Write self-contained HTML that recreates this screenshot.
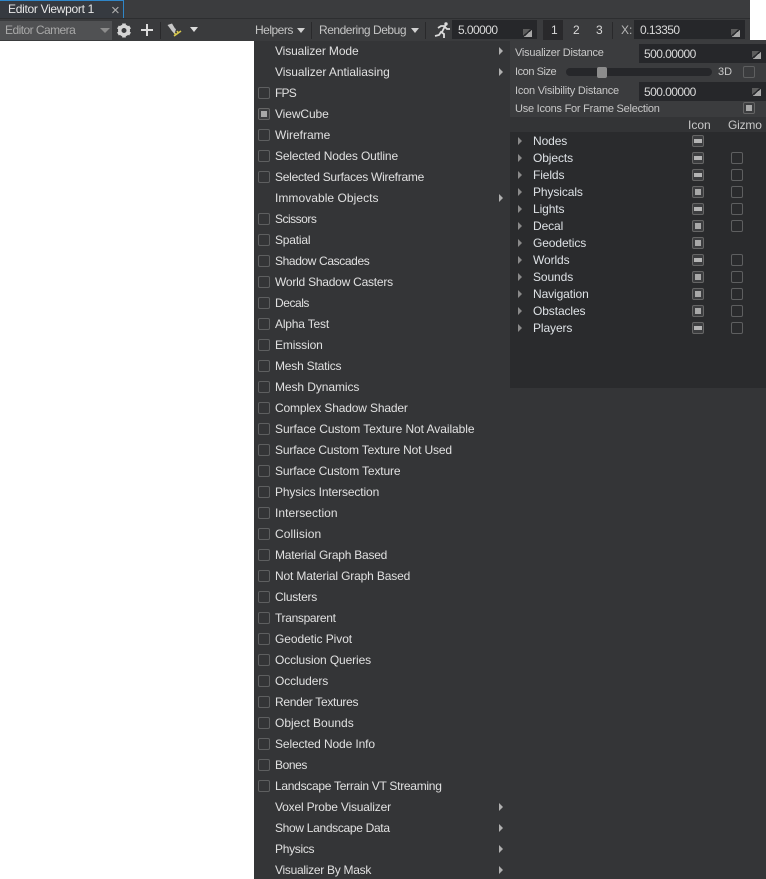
<!DOCTYPE html>
<html><head><meta charset="utf-8"><style>
html,body{margin:0;padding:0;width:766px;height:879px;overflow:hidden;background:#fff}
body{position:relative;font:12px/15px "Liberation Sans",sans-serif;color:#d4d4d4}
div,svg{position:absolute}
.t{white-space:nowrap;color:#d8d8d8}
.p{white-space:nowrap;color:#c8c8c8;font-size:11px;left:515px}
.m{left:275px;height:21px;line-height:21px;color:#e0e0e0;white-space:nowrap}
.c{width:10px;height:10px;border:1px solid #5e5f60;border-radius:2px;background:#343537}
.c[style*="left:258px"]{margin-top:1px}
.on::after{content:"";position:absolute;left:2px;top:2px;width:6px;height:6px;background:#a8a8a8}
.mid::after{content:"";position:absolute;left:1px;top:3px;width:8px;height:4px;background:#b4b4b4}
.mid,.on{border:1px solid #666;background:#3c3d3f}
.ar{width:0;height:0;border-left:4px solid #b0b0b0;border-top:4px solid transparent;border-bottom:4px solid transparent}
.ar2{width:0;height:0;border-left:4px solid #8a8a8a;border-top:4px solid transparent;border-bottom:4px solid transparent}
.f{background:#26272a;height:19px;line-height:20px;color:#d8d8d8;padding-left:6px;box-sizing:border-box;letter-spacing:-.55px}
.g{width:9px;height:8px;background:linear-gradient(to bottom right,#5c5c5c 0 42%,transparent 42% 55%,#a8a8a8 55%)}
.n{left:533px;height:17px;line-height:17px;color:#dde1e5;letter-spacing:-.1px;white-space:nowrap}
.sep{width:1px;background:#29292b}
.z{background:#2a2b2d}
</style></head><body>
<div style="left:0;top:0;width:750px;height:19px;background:#3b3c3e"></div>
<div style="left:0;top:18px;width:750px;height:1px;background:#2d2e30"></div>
<div style="left:0;top:19px;width:750px;height:22px;background:#3a3b3d"></div>
<div style="left:0;top:0;width:124px;height:18px;background:#363a40;border-top:1px solid #2f86c8;box-sizing:border-box"></div>
<div style="left:123px;top:0;width:1px;height:18px;background:#2f86c8"></div>
<div class="t" style="left:8px;top:2px;color:#e8e8e8;letter-spacing:-.3px">Editor Viewport 1</div>
<div style="left:111px;top:3px;color:#b0b0b0;font-size:15px">×</div>
<div style="left:0;top:21px;width:112px;height:19px;background:#505153"></div>
<div class="t" style="left:5px;top:23px;color:#a8a8a8;letter-spacing:-.55px">Editor Camera</div>
<div style="left:100px;top:28px;width:0;height:0;border-top:5px solid #8c8c8c;border-left:5px solid transparent;border-right:5px solid transparent"></div>
<svg style="left:116px;top:22px" width="16" height="16" viewBox="0 0 16 16"><g fill="#d4d4d4"><path fill-rule="evenodd" d="M8 2.500a6 6 0 1 0 0 12 6 6 0 0 0 0-12zM8 6a2.500 2.500 0 1 1 0 5 2.500 2.500 0 0 1 0-5z"/><rect x="6.200" y="1.500" width="3.600" height="3"/><rect x="6.200" y="12.500" width="3.600" height="3"/><rect x="6.200" y="1.500" width="3.600" height="3" transform="rotate(60 8 8.500)"/><rect x="6.200" y="1.500" width="3.600" height="3" transform="rotate(120 8 8.500)"/><rect x="6.200" y="1.500" width="3.600" height="3" transform="rotate(240 8 8.500)"/><rect x="6.200" y="1.500" width="3.600" height="3" transform="rotate(300 8 8.500)"/></g></svg>
<div style="left:141px;top:29px;width:12px;height:2px;background:#dcdcdc"></div>
<div style="left:146px;top:24px;width:2px;height:12px;background:#dcdcdc"></div>
<div class="sep" style="left:160px;top:22px;height:17px"></div>
<svg style="left:166px;top:22px" width="17" height="17" viewBox="0 0 17 17"><path fill="#c8c8c8" d="M1.500 3L6 1.500l3 5 1 .5-1.500 5-3-3.500-1-1.500z"/><path stroke="#d8c84c" stroke-width="1.600" fill="none" d="M8 14l7-5M11 9l1.500 2.500M8.500 11l1.500 2"/></svg>
<div style="left:190px;top:27px;width:0;height:0;border-top:5px solid #dcdcdc;border-left:4.500px solid transparent;border-right:4.500px solid transparent"></div>
<div class="t" style="left:255px;top:23px;color:#c4c4c4;letter-spacing:-.5px">Helpers</div>
<div style="left:297px;top:28px;width:0;height:0;border-top:5px solid #d0d0d0;border-left:4.500px solid transparent;border-right:4.500px solid transparent"></div>
<div class="sep" style="left:311px;top:22px;height:17px"></div>
<div class="t" style="left:319px;top:23px;color:#c4c4c4;letter-spacing:-.47px">Rendering Debug</div>
<div style="left:411px;top:28px;width:0;height:0;border-top:5px solid #d0d0d0;border-left:4.500px solid transparent;border-right:4.500px solid transparent"></div>
<div class="sep" style="left:425px;top:22px;height:17px"></div>
<svg style="left:434px;top:21px" width="18" height="18" viewBox="0 0 18 18"><circle cx="12" cy="3" r="1.700" fill="#dcdcdc"/><path d="M1 15l4-1 2-3 3 2 0 4M4 7l3-2 4 0 -3 6M11 6l2 2 3 0" stroke="#dcdcdc" stroke-width="1.800" fill="none"/></svg>
<div class="f" style="left:452px;top:20px;width:85px">5.00000</div>
<div class="g" style="left:523px;top:29px"></div>
<div style="left:543px;top:20px;width:20px;height:20px;background:#29292b"></div>
<div class="t" style="left:551px;top:23px">1</div>
<div class="t" style="left:573px;top:23px">2</div>
<div class="t" style="left:596px;top:23px">3</div>
<div class="sep" style="left:612px;top:22px;height:17px"></div>
<div class="t" style="left:621px;top:23px;color:#b8b8b8">X:</div>
<div class="f" style="left:634px;top:20px;width:111px">0.13350</div>
<div class="g" style="left:731px;top:29px"></div>

<div style="left:254px;top:41px;width:512px;height:838px;background:#343537"></div>
<div style="left:510px;top:40px;width:256px;height:77px;background:#3b3c3e"></div>
<div style="left:510px;top:117px;width:256px;height:15px;background:#333436"></div>
<div style="left:510px;top:132px;width:256px;height:256px;background:#2a2b2d"></div>

<div class="m" style="top:41px;letter-spacing:-.11px">Visualizer Mode</div><div class="ar" style="left:499px;top:47px"></div>
<div class="m" style="top:62px;letter-spacing:-.05px">Visualizer Antialiasing</div><div class="ar" style="left:499px;top:68px"></div>
<div class="c" style="left:258px;top:86px"></div><div class="m" style="top:83px;letter-spacing:-.8px">FPS</div>
<div class="c on" style="left:258px;top:107px"></div><div class="m" style="top:104px;letter-spacing:-.1px">ViewCube</div>
<div class="c" style="left:258px;top:128px"></div><div class="m" style="top:125px">Wireframe</div>
<div class="c" style="left:258px;top:149px"></div><div class="m" style="top:146px;letter-spacing:-.14px">Selected Nodes Outline</div>
<div class="c" style="left:258px;top:170px"></div><div class="m" style="top:167px;letter-spacing:-.26px">Selected Surfaces Wireframe</div>
<div class="m" style="top:188px;letter-spacing:.05px">Immovable Objects</div><div class="ar" style="left:499px;top:194px"></div>
<div class="c" style="left:258px;top:212px"></div><div class="m" style="top:209px;letter-spacing:-.5px">Scissors</div>
<div class="c" style="left:258px;top:233px"></div><div class="m" style="top:230px;letter-spacing:-.2px">Spatial</div>
<div class="c" style="left:258px;top:254px"></div><div class="m" style="top:251px;letter-spacing:-.38px">Shadow Cascades</div>
<div class="c" style="left:258px;top:275px"></div><div class="m" style="top:272px;letter-spacing:-.23px">World Shadow Casters</div>
<div class="c" style="left:258px;top:296px"></div><div class="m" style="top:293px;letter-spacing:-.45px">Decals</div>
<div class="c" style="left:258px;top:317px"></div><div class="m" style="top:314px;letter-spacing:-.18px">Alpha Test</div>
<div class="c" style="left:258px;top:338px"></div><div class="m" style="top:335px;letter-spacing:-.12px">Emission</div>
<div class="c" style="left:258px;top:359px"></div><div class="m" style="top:356px;letter-spacing:-.2px">Mesh Statics</div>
<div class="c" style="left:258px;top:380px"></div><div class="m" style="top:377px;letter-spacing:-.08px">Mesh Dynamics</div>
<div class="c" style="left:258px;top:401px"></div><div class="m" style="top:398px;letter-spacing:-.16px">Complex Shadow Shader</div>
<div class="c" style="left:258px;top:422px"></div><div class="m" style="top:419px;letter-spacing:-.06px">Surface Custom Texture Not Available</div>
<div class="c" style="left:258px;top:443px"></div><div class="m" style="top:440px;letter-spacing:-.16px">Surface Custom Texture Not Used</div>
<div class="c" style="left:258px;top:464px"></div><div class="m" style="top:461px;letter-spacing:-.14px">Surface Custom Texture</div>
<div class="c" style="left:258px;top:485px"></div><div class="m" style="top:482px;letter-spacing:-.13px">Physics Intersection</div>
<div class="c" style="left:258px;top:506px"></div><div class="m" style="top:503px;letter-spacing:.05px">Intersection</div>
<div class="c" style="left:258px;top:527px"></div><div class="m" style="top:524px;letter-spacing:.1px">Collision</div>
<div class="c" style="left:258px;top:548px"></div><div class="m" style="top:545px;letter-spacing:-.23px">Material Graph Based</div>
<div class="c" style="left:258px;top:569px"></div><div class="m" style="top:566px;letter-spacing:-.15px">Not Material Graph Based</div>
<div class="c" style="left:258px;top:590px"></div><div class="m" style="top:587px;letter-spacing:-.25px">Clusters</div>
<div class="c" style="left:258px;top:611px"></div><div class="m" style="top:608px;letter-spacing:-.33px">Transparent</div>
<div class="c" style="left:258px;top:632px"></div><div class="m" style="top:629px;letter-spacing:-.07px">Geodetic Pivot</div>
<div class="c" style="left:258px;top:653px"></div><div class="m" style="top:650px;letter-spacing:-.12px">Occlusion Queries</div>
<div class="c" style="left:258px;top:674px"></div><div class="m" style="top:671px;letter-spacing:-.1px">Occluders</div>
<div class="c" style="left:258px;top:695px"></div><div class="m" style="top:692px;letter-spacing:-.31px">Render Textures</div>
<div class="c" style="left:258px;top:716px"></div><div class="m" style="top:713px">Object Bounds</div>
<div class="c" style="left:258px;top:737px"></div><div class="m" style="top:734px;letter-spacing:-.12px">Selected Node Info</div>
<div class="c" style="left:258px;top:758px"></div><div class="m" style="top:755px;letter-spacing:-.4px">Bones</div>
<div class="c" style="left:258px;top:779px"></div><div class="m" style="top:776px;letter-spacing:-.28px">Landscape Terrain VT Streaming</div>
<div class="m" style="top:797px;letter-spacing:-.18px">Voxel Probe Visualizer</div><div class="ar" style="left:499px;top:803px"></div>
<div class="m" style="top:818px;letter-spacing:-.32px">Show Landscape Data</div><div class="ar" style="left:499px;top:824px"></div>
<div class="m" style="top:839px;letter-spacing:-.3px">Physics</div><div class="ar" style="left:499px;top:845px"></div>
<div class="m" style="top:860px;letter-spacing:-.28px">Visualizer By Mask</div><div class="ar" style="left:499px;top:866px"></div>

<div class="p" style="top:46px;letter-spacing:-.25px">Visualizer Distance</div>
<div class="f" style="left:639px;top:44px;width:127px;padding-left:5px">500.00000</div>
<div class="g" style="left:752px;top:51px"></div>
<div class="p" style="top:65px;letter-spacing:-.45px">Icon Size</div>
<div style="left:566px;top:68px;width:146px;height:8px;border-radius:4px;background:#26272a"></div>
<div style="left:597px;top:67px;width:10px;height:11px;border-radius:2px;background:#8c8c8c"></div>
<div class="t" style="left:718px;top:65px;color:#c8c8c8;font-size:11px">3D</div>
<div class="c" style="left:743px;top:66px;background:#3b3c3e"></div>
<div class="p" style="top:84px;letter-spacing:-.22px">Icon Visibility Distance</div>
<div class="f" style="left:639px;top:82px;width:127px;padding-left:5px">500.00000</div>
<div class="g" style="left:752px;top:88px"></div>
<div class="p" style="top:102px;letter-spacing:-.24px">Use Icons For Frame Selection</div>
<div class="c on" style="left:743px;top:102px"></div>
<div class="t" style="left:688px;top:118px;color:#c8c8c8">Icon</div>
<div class="t" style="left:728px;top:118px;color:#c8c8c8;letter-spacing:-.2px">Gizmo</div>

<div class="ar2" style="left:518px;top:137px"></div><div class="n" style="top:133px">Nodes</div><div class="c mid" style="left:692px;top:135px"></div>
<div class="ar2" style="left:518px;top:154px"></div><div class="n" style="top:150px">Objects</div><div class="c mid" style="left:692px;top:152px"></div><div class="c z" style="left:731px;top:152px"></div>
<div class="ar2" style="left:518px;top:171px"></div><div class="n" style="top:167px">Fields</div><div class="c mid" style="left:692px;top:169px"></div><div class="c z" style="left:731px;top:169px"></div>
<div class="ar2" style="left:518px;top:188px"></div><div class="n" style="top:184px">Physicals</div><div class="c on" style="left:692px;top:186px"></div><div class="c z" style="left:731px;top:186px"></div>
<div class="ar2" style="left:518px;top:205px"></div><div class="n" style="top:201px">Lights</div><div class="c mid" style="left:692px;top:203px"></div><div class="c z" style="left:731px;top:203px"></div>
<div class="ar2" style="left:518px;top:222px"></div><div class="n" style="top:218px">Decal</div><div class="c on" style="left:692px;top:220px"></div><div class="c z" style="left:731px;top:220px"></div>
<div class="ar2" style="left:518px;top:239px"></div><div class="n" style="top:235px">Geodetics</div><div class="c on" style="left:692px;top:237px"></div>
<div class="ar2" style="left:518px;top:256px"></div><div class="n" style="top:252px">Worlds</div><div class="c mid" style="left:692px;top:254px"></div><div class="c z" style="left:731px;top:254px"></div>
<div class="ar2" style="left:518px;top:273px"></div><div class="n" style="top:269px">Sounds</div><div class="c on" style="left:692px;top:271px"></div><div class="c z" style="left:731px;top:271px"></div>
<div class="ar2" style="left:518px;top:290px"></div><div class="n" style="top:286px">Navigation</div><div class="c on" style="left:692px;top:288px"></div><div class="c z" style="left:731px;top:288px"></div>
<div class="ar2" style="left:518px;top:307px"></div><div class="n" style="top:303px">Obstacles</div><div class="c on" style="left:692px;top:305px"></div><div class="c z" style="left:731px;top:305px"></div>
<div class="ar2" style="left:518px;top:324px"></div><div class="n" style="top:320px">Players</div><div class="c mid" style="left:692px;top:322px"></div><div class="c z" style="left:731px;top:322px"></div>
</body></html>
